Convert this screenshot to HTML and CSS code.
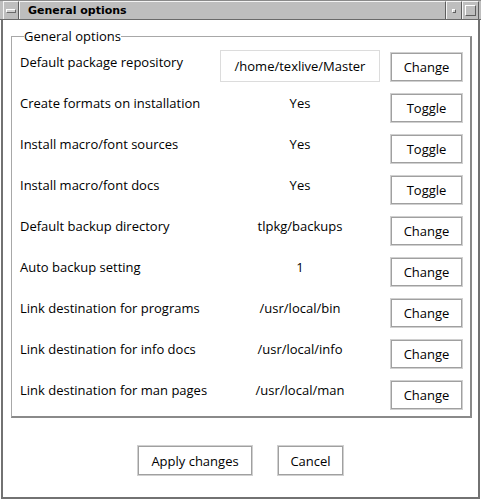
FILE: index.html
```html
<!DOCTYPE html>
<html>
<head>
<meta charset="utf-8">
<link rel="stylesheet" href="styles.css">
</head>
<body>
<div class="window">
  <div class="titlebar">
    <div class="tb-btn tb-menu"><span class="bar"></span></div>
    <div class="tb-title">General options</div>
    <div class="tb-btn tb-min"><span class="dot"></span></div>
    <div class="tb-btn tb-max"><span class="sq"></span></div>
  </div>
  <div class="frame">
    <fieldset class="group">
      <legend>General options</legend>
      <div class="grid">
        <div class="lbl">Default package repository</div>
        <div class="val box">/home/texlive/Master</div>
        <div class="btn">Change</div>

        <div class="lbl">Create formats on installation</div>
        <div class="val">Yes</div>
        <div class="btn">Toggle</div>

        <div class="lbl">Install macro/font sources</div>
        <div class="val">Yes</div>
        <div class="btn">Toggle</div>

        <div class="lbl">Install macro/font docs</div>
        <div class="val">Yes</div>
        <div class="btn">Toggle</div>

        <div class="lbl">Default backup directory</div>
        <div class="val">tlpkg/backups</div>
        <div class="btn">Change</div>

        <div class="lbl">Auto backup setting</div>
        <div class="val">1</div>
        <div class="btn">Change</div>

        <div class="lbl">Link destination for programs</div>
        <div class="val">/usr/local/bin</div>
        <div class="btn">Change</div>

        <div class="lbl">Link destination for info docs</div>
        <div class="val">/usr/local/info</div>
        <div class="btn">Change</div>

        <div class="lbl">Link destination for man pages</div>
        <div class="val">/usr/local/man</div>
        <div class="btn">Change</div>
      </div>
    </fieldset>
    <div class="actions">
      <div class="btn wide">Apply changes</div>
      <div class="btn cancel">Cancel</div>
    </div>
  </div>
</div>
</body>
</html>
```

FILE: styles.css
```css
* { box-sizing: border-box; }
html, body { margin: 0; padding: 0; background: #ffffff; }
body {
  font-family: "Open Sans", "Liberation Sans", Arial, sans-serif;
  font-size: 13px;
  color: #000;
}
.window {
  width: 481px;
  height: 499px;
  display: flex;
  flex-direction: column;
  background: #fff;
}
.titlebar {
  height: 20px;
  display: flex;
  background: #bebebe;
  border-top: 1px solid #8a8a8a;
  border-bottom: 1px solid #6a6a6a;
  padding: 0 2px 0 3px;
}
.tb-btn {
  display: flex;
  align-items: center;
  justify-content: center;
  border-left: 1px solid #f4f4f4;
  border-right: 1px solid #5e5e5e;
  border-top: 1px solid #f4f4f4;
}
.tb-menu { width: 16px; }
.tb-menu .bar {
  width: 10px; height: 4px;
  background: #d0d0d0;
  border-top: 1px solid #fff;
  border-left: 1px solid #fff;
  border-bottom: 1px solid #6a6a6a;
  border-right: 1px solid #6a6a6a;
}
.tb-title {
  flex: 1;
  font-family: "DejaVu Sans", sans-serif;
  font-weight: bold;
  font-size: 11px;
  line-height: 18px;
  padding-left: 8px;
  border-left: 1px solid #f4f4f4;
  border-right: 1px solid #5e5e5e;
  border-top: 1px solid #f4f4f4;
}
.tb-min { width: 16px; }
.tb-min .dot {
  width: 4px; height: 4px;
  background: #d8d8d8;
  border-right: 1px solid #5e5e5e;
  border-bottom: 1px solid #5e5e5e;
  border-top: 1px solid #fff;
  border-left: 1px solid #fff;
}
.tb-max { width: 17px; }
.tb-max .sq {
  width: 11px; height: 11px;
  border-top: 1px solid #fff;
  border-left: 1px solid #fff;
  border-right: 1px solid #5e5e5e;
  border-bottom: 1px solid #5e5e5e;
}
.frame {
  flex: 1;
  margin: 0 1px;
  border-left: 2px solid #727272;
  border-right: 2px solid #727272;
  border-bottom: 2px solid #727272;
  padding: 8px 0 0 8px;
  display: flex;
  flex-direction: column;
}
.group {
  margin: 0;
  width: 461px;
  min-width: 0;
  border-top: 1px solid #a8a8a8;
  border-left: 1px solid #a8a8a8;
  border-right: 2px solid #8a8a8a;
  border-bottom: 2px solid #8a8a8a;
  padding: 6px 7px 6px 8px;
}
.group legend {
  padding: 0;
  margin-left: 4px;
  line-height: 16px;
}
.grid {
  display: grid;
  grid-template-columns: 190px 160px 73px;
  grid-auto-rows: 32px;
  column-gap: 10px;
  row-gap: 9px;
}
.lbl {
  line-height: 24px;
  white-space: nowrap;
}
.val {
  line-height: 24px;
  text-align: center;
  white-space: nowrap;
}
.val.box {
  border: 1px solid #dcdcdc;
  line-height: 30px;
}
.btn {
  align-self: end;
  height: 30px;
  display: flex;
  align-items: center;
  justify-content: center;
  border: 1px solid #d0d0d0;
  box-shadow: inset 0 0 0 1px #a0a0a0;
  background: #fff;
  white-space: nowrap;
}
.actions {
  display: flex;
  justify-content: center;
  gap: 24px;
  margin-top: 27px;
  margin-left: -8px;
}
.btn.wide { width: 116px; height: 31px; }
.btn.cancel { width: 67px; height: 31px; }
```
